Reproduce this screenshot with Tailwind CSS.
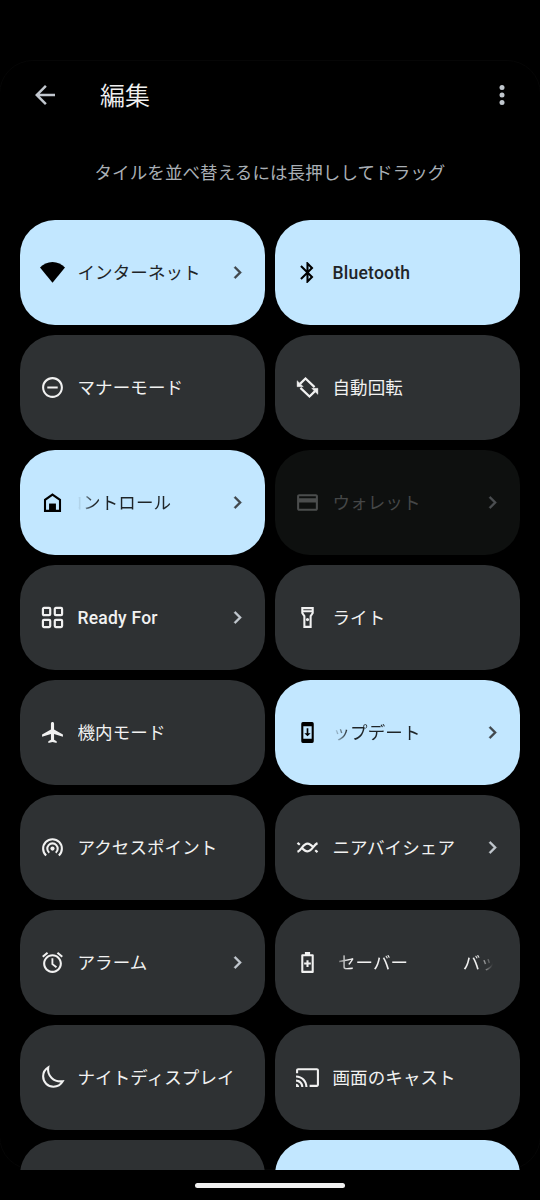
<!DOCTYPE html>
<html lang="ja">
<head>
  <meta charset="UTF-8" />
  <title>クイック設定 編集</title>
  <script src="https://cdn.jsdelivr.net/npm/@tailwindcss/browser@4"></script>
</head>
<body class="bg-black font-['Roboto','Noto_Sans_CJK_JP',sans-serif]">
  <div class="relative w-[540px] h-[1200px] bg-black overflow-hidden flex flex-col">

    <!-- Faint screen corners -->
    <div class="absolute top-[60px] bottom-[30px] -left-px -right-px rounded-[34px] border border-[#060606] pointer-events-none"></div>

    <!-- Header -->
    <header class="relative mt-[65px] h-[60px] shrink-0 pl-[30px] pr-[23px] flex items-center text-[#c1c7ce]">
      <svg class="size-[30px]" viewBox="0 0 24 24" fill="currentColor"><path d="M20 11H7.83l5.59-5.59L12 4l-8 8 8 8 1.41-1.41L7.83 13H20v-2z" /></svg>
      <h1 class="ml-10 mt-1 flex-1 text-[25px] leading-[30px] font-[350] text-[#f0f0f0]">編集</h1>
      <svg class="size-[30px]" viewBox="0 0 24 24" fill="currentColor"><circle cx="12" cy="6" r="2" /><circle cx="12" cy="12" r="2" /><circle cx="12" cy="18" r="2" /></svg>
    </header>

    <p class="relative mt-9 h-6 shrink-0 text-center text-[17.5px] leading-6 tracking-[0.1px] text-[#a9afb5]">タイルを並べ替えるには長押ししてドラッグ</p>

    <!-- Tiles -->
    <main class="relative mt-[35px] h-[950px] shrink-0 overflow-hidden px-5">
      <div id="tiles" class="grid grid-cols-2 gap-[10px]"></div>
    </main>

    <!-- Gesture bar -->
    <footer class="relative h-[30px] flex justify-center items-center">
      <div class="w-[150px] h-[5px] rounded-full bg-[#f0f0f0]"></div>
    </footer>
  </div>

  <script>
    const icons = {
      wifi: `<path d="M12 21.8L0 7.1C3.2 3.9 7.3 1.8 12 1.8s8.8 2.1 12 5.3z"/>`,
      bluetooth: `<path d="M17.71 7.71L12 2h-1v7.59L6.41 5 5 6.41 10.59 12 5 17.59 6.41 19 11 14.41V22h1l5.71-5.71-4.3-4.29 4.3-4.29zM13 5.83l1.88 1.88L13 9.59V5.83zm1.88 10.46L13 18.17v-3.76l1.88 1.88z"/>`,
      dnd: `<path d="M7 11v2h10v-2H7zm5-9C6.48 2 2 6.48 2 12s4.48 10 10 10 10-4.48 10-10S17.52 2 12 2zm0 18c-4.41 0-8-3.59-8-8s3.59-8 8-8 8 3.59 8 8-3.59 8-8 8z"/>`,
      rotate: `<path d="M18.8 11.6L10.1 3.4 4.8 8.5M5.2 12.4l8.7 8.2 5.3-5.1" fill="none" stroke="currentColor" stroke-width="2.1"/><path d="M2 5.4v5.8h6zM22 18.6v-5.8h-6z" stroke="currentColor" stroke-width=".4"/>`,
      home: `<path d="M12 4.4l7.2 5.1V20H4.8V9.5z" fill="none" stroke="currentColor" stroke-width="2"/><path d="M8.7 13h6.6v7H8.7z"/>`,
      card: `<path d="M20 4H4c-1.11 0-1.99.89-1.99 2L2 18c0 1.11.89 2 2 2h16c1.11 0 2-.89 2-2V6c0-1.11-.89-2-2-2zm0 14H4v-6h16v6zm0-10H4V6h16v2z"/>`,
      grid: `<g fill="none" stroke="currentColor" stroke-width="2.1"><rect x="2.8" y="2.8" width="7" height="7" rx="1"/><rect x="14.2" y="2.8" width="7" height="7" rx="1"/><rect x="2.8" y="14.2" width="7" height="7" rx="1"/><rect x="14.2" y="14.2" width="7" height="7" rx="1"/></g>`,
      torch: `<path d="M18 2H6v6l2 3v11h8V11l2-3V2zm-2 2v1H8V4h8zm-2 6.4V20h-4v-9.61l-2-3V7h8v.39L14 10.4z"/><circle cx="12" cy="14" r="1.5"/>`,
      plane: `<path d="M22 16v-2l-8.5-5V3.5c0-.83-.67-1.5-1.5-1.5s-1.5.67-1.5 1.5V9L2 14v2l8.5-2.5V19L8 20.5V22l4-1 4 1v-1.5L13.5 19v-5.5L22 16z"/>`,
      update: `<path fill-rule="evenodd" d="M7.5 2h9A1.5 1.5 0 0 1 18 3.5v17a1.5 1.5 0 0 1-1.5 1.5h-9A1.5 1.5 0 0 1 6 20.500v-17A1.5 1.5 0 0 1 7.5 2zM8 6v12h8V6z"/><path d="M11.2 8h1.6v4.6H15l-3 3-3-3h2.2z"/>`,
      hotspot: `<circle cx="12" cy="13" r="2"/><path d="M5.9 19.7A9 9 0 1 1 18.1 19.7M8.9 17A5 5 0 1 1 15.1 17" fill="none" stroke="currentColor" stroke-width="2"/>`,
      nearby: `<path d="M2.4 16.2C6.3 14.6 7.600 8.3 12 8.3c2.700 0 4.300 2.100 6 4.200M21.600 7.800C17.700 9.400 16.400 15.700 12 15.700c-2.700 0-4.300-2.100-6-4.200M2.400 7.500l2.200 1.900M21.600 16.500l-2.200-1.900" fill="none" stroke="currentColor" stroke-width="2.1"/>`,
      alarm: `<path d="M22 5.72l-4.6-3.86-1.29 1.53 4.6 3.86L22 5.72zM7.88 3.39L6.6 1.86 2 5.71l1.29 1.53 4.59-3.85zM12.8 8H11v6l4.2 3.3 1.2-1.4-3.6-2.8V8zM12 4c-4.97 0-9 4.03-9 9s4.02 9 9 9c4.97 0 9-4.03 9-9s-4.03-9-9-9zm0 16c-3.87 0-7-3.13-7-7s3.13-7 7-7 7 3.13 7 7-3.13 7-7 7z"/>`,
      battery: `<path fill-rule="evenodd" d="M9.500 2h5v2H17a1 1 0 0 1 1 1v16a1 1 0 0 1-1 1H7a1 1 0 0 1-1-1V5a1 1 0 0 1 1-1h2.500zM8 6v14h8V6z"/><path d="M11 9.800h2v2.200h2.200v2H13v2.200h-2V14H8.800v-2H11z"/>`,
      moon: `<path d="M7.9 2.2C4.9 4 3 7.2 3 10.9c0 5.5 4.4 9.9 9.9 9.9 3.8 0 7.2-2.1 8.9-5.2C13.4 16.6 6.5 10.5 7.9 2.2z" fill="none" stroke="currentColor" stroke-width="2"/>`,
      cast: `<path d="M21 3H3c-1.1 0-2 .9-2 2v3h2V5h18v14h-7v2h7c1.1 0 2-.9 2-2V5c0-1.1-.9-2-2-2zM1 18v3h3c0-1.66-1.34-3-3-3zm0-4v2c2.76 0 5 2.24 5 5h2c0-3.87-3.13-7-7-7zm0-4v2c4.97 0 9 4.03 9 9h2c0-6.08-4.93-11-11-11z"/>`
    };

    const fadeLeft = "[mask-image:linear-gradient(to_right,transparent,black_15px)]";
    const fadeBoth = "[mask-image:linear-gradient(to_right,transparent,black_15px,black_calc(100%_-_18px),transparent_calc(100%_-_2px))]";

    const tiles = [
      { icon: "wifi", label: "インターネット", state: "on", arrow: true },
      { icon: "bluetooth", label: "Bluetooth", state: "on" },
      { icon: "dnd", label: "マナーモード", state: "off" },
      { icon: "rotate", label: "自動回転", state: "off" },
      { icon: "home", label: `<span class="-ml-[12px]">コントロール</span>`, state: "on", arrow: true, fade: fadeLeft },
      { icon: "card", label: "ウォレット", state: "disabled", arrow: true },
      { icon: "grid", label: "Ready For", state: "off", arrow: true },
      { icon: "torch", label: "ライト", state: "off" },
      { icon: "plane", label: "機内モード", state: "off" },
      { icon: "update", label: "ップデート", state: "on", arrow: true, fade: fadeLeft },
      { icon: "hotspot", label: "アクセスポイント", state: "off" },
      { icon: "nearby", label: "ニアバイシェア", state: "off", arrow: true },
      { icon: "alarm", label: "アラーム", state: "off", arrow: true },
      { icon: "battery", label: `<span class="ml-[5.5px]">セーバー</span><span class="ml-[54.5px]">バッ</span>`, state: "off", fade: fadeBoth },
      { icon: "moon", label: "ナイトディスプレイ", state: "off" },
      { icon: "cast", label: "画面のキャスト", state: "off" },
      { state: "off" },
      { state: "on" }
    ];

    const styles = {
      on: { tile: "bg-[#c2e7ff]", icon: "text-black", label: "text-[#1f2528]", arrow: "text-[#41484d]" },
      off: { tile: "bg-[#2e3133]", icon: "text-[#f1f1f1]", label: "text-[#f1f1f1]", arrow: "text-[#c1c7ce]" },
      disabled: { tile: "bg-[#0e100f]", icon: "text-[#4b4d4d]", label: "text-[#454747]", arrow: "text-[#4b4e51]" }
    };

    document.getElementById("tiles").innerHTML = tiles.map(t => {
      const s = styles[t.state];
      const latin = /^[A-Z]/.test(t.label);
      return `
        <div class="h-[105px] rounded-[35px] pl-5 pr-[15px] flex items-center ${s.tile}">
          ${t.icon ? `<svg class="size-[25px] shrink-0 ${s.icon}" viewBox="0 0 24 24" fill="currentColor">${icons[t.icon]}</svg>
          <div class="ml-[12.5px] mr-[10px] flex-1 min-w-0 flex overflow-hidden whitespace-nowrap text-[17.5px] leading-6 ${latin ? "font-medium tracking-[0.23px]" : "tracking-[0.1px]"} ${s.label} ${t.fade || ""}">${t.label}</div>` : ""}
          ${t.arrow ? `<svg class="size-[25px] shrink-0 ${s.arrow}" viewBox="0 0 24 24" fill="currentColor" stroke="currentColor" stroke-width=".3"><path d="M10 6L8.59 7.41 13.17 12l-4.58 4.59L10 18l6-6z"/></svg>` : ""}
        </div>`;
    }).join("");
  </script>
</body>
</html>
